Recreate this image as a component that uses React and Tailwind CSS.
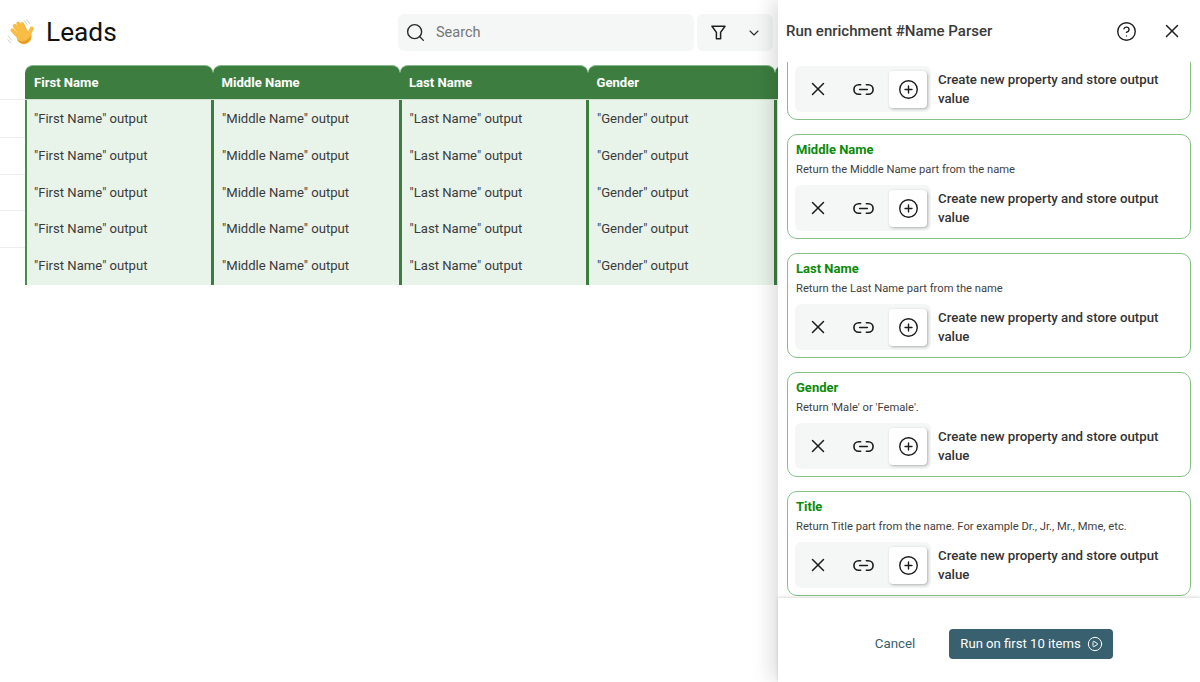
import React from 'react';
import { X, Link2, CirclePlus, CircleHelp, Search, ChevronDown, CirclePlay } from 'lucide-react';

const columns = ['First Name', 'Middle Name', 'Last Name', 'Gender', 'Title'];

const outputs = [
  { name: 'First Name', description: 'Return the First Name part from the name' },
  { name: 'Middle Name', description: 'Return the Middle Name part from the name' },
  { name: 'Last Name', description: 'Return the Last Name part from the name' },
  { name: 'Gender', description: "Return 'Male' or 'Female'." },
  { name: 'Title', description: 'Return Title part from the name. For example Dr., Jr., Mr., Mme, etc.' },
];

const WaveIcon = () => (
  <svg width="27" height="27" viewBox="0 0 30 30" fill="none">
    <g stroke="#f8bd45" strokeLinecap="round">
      <path d="M6 12.5 L14 21" strokeWidth="4.4" />
      <path d="M8.5 7.5 L16 18" strokeWidth="4.4" />
      <path d="M12.5 5 L18.5 16" strokeWidth="4.4" />
      <path d="M17 5.5 L21.5 15" strokeWidth="4.2" />
      <path d="M27.5 10.5 L23 20" strokeWidth="4.4" />
    </g>
    <ellipse cx="19" cy="20" rx="8.2" ry="8" fill="#f8bd45" />
    <path d="M11 22 C13 29 23 30 26 22 C27 20 27.5 17 28 15 C26 21 22 25 17 25 C14 25 12 24 11 22 Z" fill="#e39a1f" />
    <g stroke="#c3cacd" strokeWidth="1" strokeLinecap="round">
      <path d="M19 2 L22.5 6" />
      <path d="M22 1 L25 5" />
      <path d="M1.5 19 L5 23.5" />
      <path d="M1 23 L4 26.5" />
    </g>
  </svg>
);

const FunnelIcon = () => (
  <svg width="15" height="15" viewBox="0 0 15 15" fill="none" stroke="#1f1f1f" strokeWidth="1.5" strokeLinejoin="round">
    <path d="M1 1.2 H14 L9.6 7.4 V13.8 H5.4 V7.4 Z" />
  </svg>
);

const OutputCard = ({ name, description }) => (
  <div className="h-[105px] shrink-0 rounded-[10px] border border-[#84c287] bg-white px-2 pt-[5px]">
    <div className="text-[13px] leading-[20px] font-bold text-[#0b8a0b]">{name}</div>
    <div className="mt-[1px] text-[11.2px] leading-[18px] text-[#3f3f3f]">{description}</div>
    <div className="mt-[6px] -ml-[1px] flex items-center gap-[7px]">
      <div className="flex h-[46px] w-[136px] shrink-0 items-center rounded-md bg-[#f5f7f6]">
        <div className="flex w-[46px] justify-center text-[#1c1c1c]">
          <X size={22} strokeWidth={1.6} />
        </div>
        <div className="flex w-[44px] justify-center text-[#1c1c1c]">
          <Link2 size={23} strokeWidth={1.7} />
        </div>
        <div className="ml-[4px] flex h-[37px] w-[38px] items-center justify-center rounded-[4px] bg-white text-[#1c1c1c] shadow-[1px_1px_3px_rgba(0,0,0,0.3)]">
          <CirclePlus size={21} strokeWidth={1.6} />
        </div>
      </div>
      <div className="w-[240px] text-[13.25px] leading-[19.5px] font-medium text-[#333333]">
        Create new property and store output value
      </div>
    </div>
  </div>
);

export default function App() {
  return (
    <div className="flex h-[682px] w-[1200px] overflow-hidden bg-white font-['Roboto',sans-serif]">
      {/* Leads table */}
      <div className="w-[778px] shrink-0 overflow-hidden">
        <div className="flex h-[65px] items-start pt-[14px]">
          <div className="flex h-[37px] w-[398px] shrink-0 items-center pl-[7px]">
            <WaveIcon />
            <h1 className="ml-[12px] text-[26.25px] leading-[37px] font-normal text-[#111111]">Leads</h1>
          </div>
          <div className="flex h-[37px] w-[296px] shrink-0 items-center rounded-md bg-[#f5f7f6] pl-[7px] text-[#2a2a2a]">
            <Search size={21} strokeWidth={1.6} />
            <span className="ml-[10px] pt-[1px] text-[14.5px] text-[#757575]">Search</span>
          </div>
          <div className="ml-[3px] flex h-[37px] w-[76px] shrink-0 items-center rounded-md bg-[#f5f7f6] pl-[14px]">
            <FunnelIcon />
            <ChevronDown size={16} strokeWidth={1.6} className="ml-[20px] text-[#2a2a2a]" />
          </div>
        </div>

        <div className="flex w-[1000px] pl-[25px]">
          {columns.map((col) => (
            <div key={col} className="h-[35px] w-[187.5px] shrink-0 rounded-t-[8px] border-t border-b border-[#8abb8c] border-b-[#cfe3d1] bg-[#3d7e40] px-[9px] text-[13.1px] leading-[34px] font-bold text-white">
              {col}
            </div>
          ))}
        </div>

        <div className="relative w-[1000px] pl-[25px]">
          {[0, 1, 2, 3, 4].map((row) => (
            <div key={row} className={row === 4 ? 'flex h-[38px]' : 'flex h-[36.75px]'}>
              {columns.map((col, i) => (
                <div key={col} className={i === 0
                  ? 'h-full w-[187.5px] shrink-0 border-l-2 border-[#4c8a4f] bg-[#e8f3ea] pl-[7px] text-[13.1px] leading-[38px] text-[#3a3a3a]'
                  : 'mr-[1.5px] -ml-[1.5px] h-full w-[187.5px] shrink-0 border-l-3 border-[#3d7e40] bg-[#e8f3ea] pl-[8px] text-[13.1px] leading-[38px] text-[#3a3a3a]'}>
                  "{col}" output
                </div>
              ))}
            </div>
          ))}
          {/* row rules in the gutter left of the table */}
          <div className="absolute -top-[1px] left-0 w-[25px] border-t border-[#eeeeee]">
            {[0, 1, 2, 3].map((row) => (
              <div key={row} className={row === 0 ? 'h-[37.75px] border-b border-[#eeeeee]' : 'h-[36.75px] border-b border-[#eeeeee]'} />
            ))}
          </div>
        </div>
      </div>

      {/* Enrichment panel */}
      <div className="relative flex w-[422px] shrink-0 flex-col bg-white shadow-[-6px_0_20px_rgba(0,0,0,0.14)]">
        <div className="flex h-[62px] shrink-0 items-center pl-[8px]">
          <h2 className="text-[15px] font-medium text-[#3a3a3a]">Run enrichment #Name Parser</h2>
          <div className="ml-auto flex items-center">
            <CircleHelp size={21} strokeWidth={1.6} className="text-[#1f1f1f]" />
            <X size={22} strokeWidth={1.6} className="mr-[17px] ml-[24px] text-[#1f1f1f]" />
          </div>
        </div>

        <div className="h-[536px] shrink-0 overflow-hidden">
          <div className="-mt-[47px] flex flex-col gap-[14px] px-[9px]">
            {outputs.map((item) => (
              <OutputCard key={item.name} name={item.name} description={item.description} />
            ))}
          </div>
        </div>

        <div className="flex h-[84px] shrink-0 items-center gap-[20px] pt-[7px] pl-[83px] shadow-[0_-1px_3px_rgba(0,0,0,0.15)]">
          <button className="w-[68px] text-center text-[13.3px] text-[#38606e]">Cancel</button>
          <button className="flex h-[30px] w-[164px] items-center justify-center gap-[6px] rounded-[4px] bg-[#38606e] pl-[1px] text-[13.1px] text-white">
            Run on first 10 items
            <CirclePlay size={16} strokeWidth={1.5} />
          </button>
        </div>
      </div>
    </div>
  );
}
